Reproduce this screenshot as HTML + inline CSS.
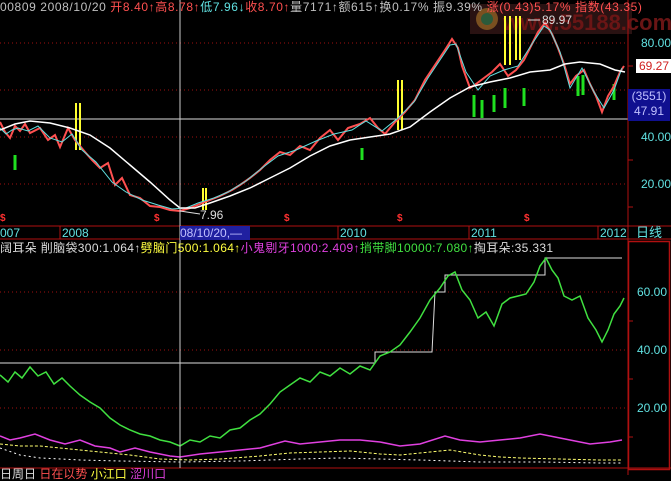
<!DOCTYPE html>
<html><head><meta charset="utf-8"><style>
body{margin:0;background:#000;width:671px;height:475px;overflow:hidden;position:relative;font-family:"Liberation Sans","Noto Sans CJK SC",sans-serif;font-size:12px}
.t{position:absolute;white-space:nowrap;line-height:14px}
.d{color:#ff3030;font-weight:bold;font-size:10px}
</style></head><body>
<svg width="671" height="475" style="position:absolute;left:0;top:0">
<rect x="470" y="4" width="162" height="30" fill="#3a1a1a" opacity="0.7"/>
<circle cx="487" cy="19" r="11" fill="#7a5020"/><circle cx="487" cy="19" r="6" fill="#2a5a3a"/>
<text x="503" y="30" font-family="Liberation Sans" font-weight="bold" font-size="22" fill="#6a1515">www.55188.com</text>
<g stroke="#a01010" stroke-dasharray="1,3">
<line x1="0" y1="43" x2="628" y2="43"/><line x1="0" y1="90" x2="628" y2="90"/><line x1="0" y1="137" x2="628" y2="137"/><line x1="0" y1="184" x2="628" y2="184"/>
<line x1="0" y1="292" x2="628" y2="292"/><line x1="0" y1="350" x2="628" y2="350"/><line x1="0" y1="408" x2="628" y2="408"/>
</g>
<line x1="0" y1="119" x2="638" y2="119" stroke="#ddd"/>
<g stroke="#b01010" fill="none">
<line x1="628" y1="0" x2="628" y2="475"/>
<line x1="0" y1="226" x2="671" y2="226"/><line x1="0" y1="239" x2="671" y2="239"/>
<line x1="0" y1="468" x2="671" y2="468"/>
<rect x="628.5" y="241.5" width="41" height="228" stroke-width="1.5"/>
<line x1="180" y1="226" x2="180" y2="239"/><line x1="338" y1="226" x2="338" y2="239"/><line x1="469" y1="226" x2="469" y2="239"/><line x1="598" y1="226" x2="598" y2="239"/><line x1="60" y1="226" x2="60" y2="239"/>
</g>
<g stroke="#b01010"><line x1="628" y1="66" x2="633" y2="66"/><line x1="628" y1="113" x2="633" y2="113"/><line x1="628" y1="160" x2="633" y2="160"/><line x1="628" y1="207" x2="633" y2="207"/><line x1="628" y1="321" x2="633" y2="321"/><line x1="628" y1="379" x2="633" y2="379"/><line x1="628" y1="437" x2="633" y2="437"/></g>
<g stroke="#ffff30" stroke-width="2">
<line x1="76" y1="103" x2="76" y2="150"/><line x1="80" y1="103" x2="80" y2="150"/>
<line x1="398" y1="80" x2="398" y2="130"/><line x1="402" y1="80" x2="402" y2="130"/>
<line x1="505" y1="16" x2="505" y2="65"/><line x1="510" y1="16" x2="510" y2="65"/><line x1="516" y1="16" x2="516" y2="60"/><line x1="520" y1="16" x2="520" y2="60"/>
<line x1="203" y1="188" x2="203" y2="210"/><line x1="206" y1="188" x2="206" y2="210"/>
</g>
<g stroke="#20e020" stroke-width="3">
<line x1="15" y1="155" x2="15" y2="170"/><line x1="474" y1="95" x2="474" y2="117"/><line x1="482" y1="100" x2="482" y2="118"/><line x1="494" y1="95" x2="494" y2="112"/><line x1="505" y1="88" x2="505" y2="108"/><line x1="524" y1="88" x2="524" y2="106"/><line x1="578" y1="76" x2="578" y2="96"/><line x1="583" y1="75" x2="583" y2="95"/><line x1="614" y1="84" x2="614" y2="100"/><line x1="362" y1="148" x2="362" y2="160"/>
</g>
<polyline fill="none" stroke="#ff5050" stroke-width="2" points="0,122 5,132 10,138 15,126 20,131 25,124 30,133 40,128 48,140 55,135 60,147 68,128 75,140 85,152 92,160 100,168 108,163 115,185 122,178 130,195 140,198 150,206 160,207 170,210 180,211 190,208 200,204 210,200 220,196 232,190 240,185 250,178 260,170 270,160 280,152 290,155 300,146 310,150 320,138 330,130 338,140 348,128 360,124 370,118 378,128 385,134 395,122 405,112 415,100 425,80 435,65 445,50 452,39 458,48 462,66 470,88 476,84 484,78 492,72 500,64 508,76 516,70 524,60 530,48 538,32 545,23 552,34 558,48 564,64 570,84 576,76 584,70 590,84 596,96 602,112 608,96 614,86 620,72 624,66"/>
<polyline fill="none" stroke="#60e0e0" stroke-width="1" points="0,128 6,134 12,130 18,128 28,131 38,126 50,138 62,142 72,134 82,150 96,162 112,182 126,192 142,200 158,205 172,209 186,208 198,203 214,198 228,192 246,181 262,168 278,156 296,150 316,141 334,134 352,130 366,121 382,131 398,118 414,102 428,78 440,60 450,45 456,44 466,72 478,90 490,76 504,70 518,66 532,44 544,26 550,30 560,52 570,88 582,68 594,92 604,108 614,90 622,68"/>
<polyline fill="none" stroke="#fff" stroke-width="1.5" points="0,130 15,124 30,121 50,123 70,128 90,135 110,148 130,165 150,182 170,200 180,208 195,208 210,203 230,196 250,188 270,178 290,168 310,156 330,146 350,140 370,137 390,134 410,127 430,112 450,98 470,87 490,82 510,78 530,72 550,70 565,64 580,62 600,64 615,70 625,72"/>
<line x1="180" y1="211" x2="200" y2="214" stroke="#ddd"/>
<line x1="528" y1="20" x2="540" y2="20" stroke="#ddd"/>
<polyline fill="none" stroke="#ddd" stroke-width="1" points="0,363 375,363 375,352 410,352 432,352 435,292 445,292 445,275 545,275 545,258 622,258"/>
<polyline fill="none" stroke="#40e040" stroke-width="1.5" points="0,375 8,382 15,372 22,378 30,367 38,376 46,372 54,384 62,378 70,386 80,395 90,402 100,408 110,418 120,425 130,430 140,434 150,436 160,440 170,442 180,446 190,440 200,442 210,436 220,438 230,430 240,428 250,420 260,414 270,404 280,392 290,385 300,378 310,382 320,372 330,376 340,368 350,374 360,366 370,370 380,356 390,352 400,345 410,332 420,318 430,300 440,288 448,276 455,272 462,290 470,300 478,318 486,312 494,326 502,304 510,298 518,296 526,294 534,282 540,266 546,258 552,270 558,278 564,296 572,300 580,296 588,318 596,330 602,342 608,330 614,314 620,306 624,298"/>
<polyline fill="none" stroke="#e040e0" stroke-width="1.5" points="0,436 10,440 20,438 35,434 50,440 65,444 80,440 95,446 110,448 120,452 135,448 150,452 170,456 180,457 200,454 220,452 240,450 260,448 285,441 300,444 320,442 340,440 360,440 380,442 400,446 420,444 445,436 460,440 480,442 500,440 520,438 540,434 555,437 570,440 590,444 610,442 622,440"/>
<polyline fill="none" stroke="#ffff70" stroke-width="1" stroke-dasharray="3,2" points="0,444 20,446 40,446 60,448 80,450 100,452 130,455 160,459 190,460 220,459 260,456 290,453 320,452 350,451 380,454 400,455 420,453 450,450 480,455 500,457 520,458 560,459 600,460 622,460"/>
<polyline fill="none" stroke="#fff" stroke-width="1" stroke-dasharray="2,3" points="0,448 20,455 40,458 80,460 120,461 180,462 240,461 300,459 340,458 380,459 420,460 480,462 540,462 600,463 622,463"/>
<line x1="180" y1="0" x2="180" y2="468" stroke="#ccc"/>
</svg>
<div class="t" style="left:0px;top:0px;color:#c0c0c0;letter-spacing:0.6px">00809 2008/10/20 <span style="color:#ff5050">开8.40↑高8.78↑</span><span style="color:#60e0e0">低7.96↓</span><span style="color:#ff5050">收8.70↑</span>量7171↑额615↑换0.17% 振9.39% <span style="color:#ff5050">涨(0.43)5.17% 指数(43.35)</span></div>
<div class="t" style="left:542px;top:13px;color:#ddd">89.97</div>
<div class="t" style="left:200px;top:208px;color:#ddd">7.96</div>
<div class="t" style="left:641px;top:36px;color:#60e0e0">80.00</div>
<div class="t" style="left:636px;top:59px;background:#fff;color:#d02020;padding:0 3px">69.27</div>
<div class="t" style="left:628px;top:89px;width:42px;height:32px;background:#101090;color:#c0c0ff;text-align:center;line-height:15px">(3551)<br>47.91</div>
<div class="t" style="left:641px;top:130px;color:#60e0e0">40.00</div>
<div class="t" style="left:641px;top:177px;color:#60e0e0">20.00</div>
<div class="t d" style="left:0px;top:212px">$</div>
<div class="t d" style="left:154px;top:212px">$</div>
<div class="t d" style="left:284px;top:212px">$</div>
<div class="t d" style="left:397px;top:212px">$</div>
<div class="t d" style="left:524px;top:212px">$</div>
<div class="t" style="left:0px;top:226px;color:#60e0e0">007</div>
<div class="t" style="left:62px;top:226px;color:#60e0e0">2008</div>
<div class="t" style="left:180px;top:226px;width:70px;background:#2020a0;color:#c0c0ff">08/10/20,—</div>
<div class="t" style="left:340px;top:226px;color:#60e0e0">2010</div>
<div class="t" style="left:471px;top:226px;color:#60e0e0">2011</div>
<div class="t" style="left:600px;top:226px;color:#60e0e0">2012</div>
<div class="t" style="left:636px;top:226px;color:#60e0e0;font-size:13px">日线</div>
<div class="t" style="left:0px;top:241px;color:#ddd;letter-spacing:0.35px">阔耳朵 削脑袋300:1.064↑<span style="color:#ffff40">劈脑门500:1.064↑</span><span style="color:#e040e0">小鬼剔牙1000:2.409↑</span><span style="color:#40e040">捎带脚10000:7.080↑</span>掏耳朵:35.331</div>
<div class="t" style="left:637px;top:285px;color:#60e0e0">60.00</div>
<div class="t" style="left:637px;top:343px;color:#60e0e0">40.00</div>
<div class="t" style="left:637px;top:401px;color:#60e0e0">20.00</div>
<div class="t" style="left:0px;top:467px;color:#ddd">日周日 <span style="color:#ff5050">日在以势</span> <span style="color:#ffff40">小江口</span> <span style="color:#e040e0">涩川口</span></div>
</body></html>
